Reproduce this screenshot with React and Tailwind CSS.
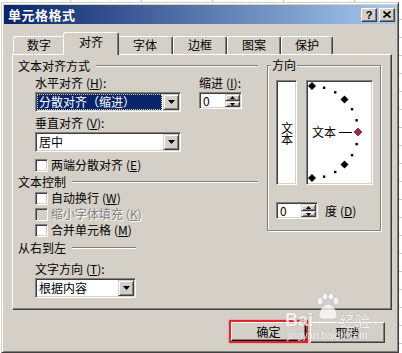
import React from 'react';

const raised = 'border border-t-white border-l-white border-r-[#404040] border-b-[#404040] shadow-[inset_-1px_-1px_#808080]';
const sunken = 'border border-t-[#808080] border-l-[#808080] border-r-white border-b-white shadow-[inset_1px_1px_#404040,inset_-1px_-1px_#d4d0c8]';
const arrowBtn = 'bg-[#d4d0c8] border border-t-[#d4d0c8] border-l-[#d4d0c8] border-r-[#404040] border-b-[#404040] shadow-[inset_1px_1px_white,inset_-1px_-1px_#808080]';

const Key = ({ children }) => (
    <span className="ml-[3px]">(<u>{children}</u>)</span>
);

const GroupTitle = ({ children, className = '' }) => (
    <div className={`flex items-center h-[14px] ${className}`}>
        <span className="whitespace-nowrap">{children}</span>
        <div className="flex-1 ml-[6px] h-[2px] border-t border-t-[#808080] border-b border-b-white" />
    </div>
);

const DownArrow = () => (
    <svg width="7" height="4" viewBox="0 0 7 4">
        <path d="M0 0h7L3.5 4z" fill="#000" />
    </svg>
);

const Select = ({ value, className = '', selected = false }) => (
    <div className={`${sunken} ${className} h-[20px] bg-white p-[1px] flex`}>
        <div className="flex-1 min-w-0 flex items-center pr-[1px]">
            {selected ? (
                <div className="w-full h-full bg-[#0a246a] text-white flex items-center pl-[1px] border border-dotted border-[#d8d0a0] whitespace-nowrap">
                    {value}
                </div>
            ) : (
                <span className="pl-[2px] whitespace-nowrap">{value}</span>
            )}
        </div>
        <div className={`${arrowBtn} w-[16px] h-full flex items-center justify-center`}>
            <DownArrow />
        </div>
    </div>
);

const Spin = ({ className = '' }) => (
    <div className={`${sunken} ${className} h-[17px] bg-white p-[1px] flex`}>
        <span className="flex-1 pl-[2px] flex items-center">0</span>
        <div className="w-[15px] flex flex-col">
            <div className={`${arrowBtn} h-[7px] flex items-center justify-center`}>
                <svg width="5" height="3" viewBox="0 0 5 3"><path d="M2.5 0L5 3H0z" fill="#000" /></svg>
            </div>
            <div className={`${arrowBtn} flex-1 flex items-center justify-center`}>
                <svg width="5" height="3" viewBox="0 0 5 3"><path d="M0 0h5L2.5 3z" fill="#000" /></svg>
            </div>
        </div>
    </div>
);

const Check = ({ label, disabled = false, className = '' }) => (
    <div className={`flex items-center pl-[17px] ${className}`}>
        <div className={`${sunken} w-[13px] h-[13px] ${disabled ? 'bg-[#d4d0c8]' : 'bg-white'}`} />
        <span className={`ml-[3px] whitespace-nowrap ${disabled ? 'text-[#808080] [text-shadow:1px_1px_0_#fff]' : ''}`}>
            {label}
        </span>
    </div>
);

const Tab = ({ label, w, active = false }) =>
    active ? (
        <div className={`${w} -mx-[2px] h-[23px] -mb-[1px] relative z-10 bg-[#d4d0c8] border-l border-t border-r border-l-white border-t-white border-r-[#404040] shadow-[inset_-1px_0_#808080] rounded-t-[3px] flex justify-center pt-[2px]`}>
            {label}
        </div>
    ) : (
        <div className={`${w} h-[18px] border-l border-t border-r border-l-white border-t-white border-r-[#404040] shadow-[inset_-1px_0_#808080] rounded-t-[3px] flex justify-center pt-[1px]`}>
            {label}
        </div>
    );

const Dial = () => {
    const marks = [];
    for (let i = 0; i <= 12; i++) {
        const a = ((-90 + 15 * i) * Math.PI) / 180;
        const x = 4 + 46 * Math.cos(a);
        const y = 50 + 46 * Math.sin(a);
        if (i === 6) {
            marks.push(<path key={i} d={`M${x} ${y - 4}L${x + 4} ${y}L${x} ${y + 4}L${x - 4} ${y}z`} fill="#9b2a3c" stroke="#3a1018" strokeWidth="0.6" />);
        } else if (i % 3 === 0) {
            marks.push(<path key={i} d={`M${x} ${y - 4}L${x + 4} ${y}L${x} ${y + 4}L${x - 4} ${y}z`} fill="#000" />);
        } else {
            marks.push(<rect key={i} x={x - 1} y={y - 1} width="2.4" height="2.4" fill="#000" />);
        }
    }
    return (
        <svg width="63" height="101" viewBox="0 0 63 101" className="block">
            {marks}
            <text x="4" y="55" fontSize="12" fontFamily="Noto Sans CJK SC, sans-serif" fill="#000">文本</text>
            <line x1="31" y1="50.5" x2="44" y2="50.5" stroke="#000" strokeWidth="1" />
        </svg>
    );
};

export default function App() {
    return (
        <div className="relative w-[402px] h-[353px] overflow-hidden bg-white flex flex-col font-['Noto_Sans_CJK_SC','Noto_Sans',sans-serif] text-[12px] leading-[14px] text-black">
            <div className="h-[2px] shrink-0 bg-[repeating-linear-gradient(to_right,white_0,white_70px,#c8c8c8_70px,#c8c8c8_71px)]" />
            <div className="flex flex-1 min-h-0">
                <div className="w-[1px] shrink-0 bg-white" />
                <div className="w-[398px] h-[351px] shrink-0 bg-[#d4d0c8] border border-t-[#d4d0c8] border-l-[#d4d0c8] border-r-[#404040] border-b-[#404040] shadow-[inset_1px_1px_white,inset_-1px_-1px_#808080] p-[2px] flex flex-col">
                    {/* title bar */}
                    <div className="h-[19px] shrink-0 bg-[linear-gradient(to_right,#0a246a,#a6caf0)] flex items-center pl-[4px] pr-[1px]">
                        <span className="flex-1 text-white font-bold text-[13px] leading-[15px] tracking-[0.5px]">单元格格式</span>
                        <div className={`${raised} w-[16px] h-[14px] bg-[#d4d0c8] flex items-center justify-center font-bold text-[11px] leading-[12px] font-['Liberation_Sans',sans-serif]`}>?</div>
                        <div className={`${raised} ml-[2px] w-[16px] h-[14px] bg-[#d4d0c8] flex items-center justify-center`}>
                            <svg width="8" height="7" viewBox="0 0 8 7">
                                <path d="M0.5 0.5L7.5 6.5M7.5 0.5L0.5 6.5" stroke="#000" strokeWidth="1.6" />
                            </svg>
                        </div>
                    </div>

                    {/* body */}
                    <div className="flex flex-col pl-[8px] pr-[4px] pt-[8px]">
                        <div className="flex items-end h-[22px] pl-[1px]">
                            <Tab label="数字" w="w-[52px]" />
                            <Tab label="对齐" w="w-[56px]" active />
                            <Tab label="字体" w="w-[56px]" />
                            <Tab label="边框" w="w-[54px]" />
                            <Tab label="图案" w="w-[54px]" />
                            <Tab label="保护" w="w-[52px]" />
                        </div>

                        <div className={`${raised} w-[380px] h-[256px] flex pl-[5px] pr-[10px] pt-[4px]`}>
                            {/* left column */}
                            <div className="w-[240px] flex flex-col">
                                <GroupTitle>文本对齐方式</GroupTitle>
                                <div className="flex pl-[17px] mt-[3px]">
                                    <div className="w-[146px] flex flex-col">
                                        <div className="h-[14px]">水平对齐<Key>H</Key>:</div>
                                        <Select className="mt-[2px]" value="分散对齐（缩进）" selected />
                                        <div className="h-[14px] mt-[4px]">垂直对齐<Key>V</Key>:</div>
                                        <Select className="mt-[2px]" value="居中" />
                                    </div>
                                    <div className="ml-[18px] flex flex-col">
                                        <div className="h-[14px]">缩进<Key>I</Key>:</div>
                                        <Spin className="mt-[2px] w-[43px]" />
                                    </div>
                                </div>
                                <Check className="h-[14px] mt-[6px]" label={<>两端分散对齐<Key>E</Key></>} />

                                <GroupTitle className="mt-[3px]">文本控制</GroupTitle>
                                <Check className="h-[16px] mt-[1px]" label={<>自动换行<Key>W</Key></>} />
                                <Check className="h-[16px]" disabled label={<>缩小字体填充<Key>K</Key></>} />
                                <Check className="h-[16px]" label={<>合并单元格<Key>M</Key></>} />

                                <GroupTitle className="mt-[3px] w-[118px]">从右到左</GroupTitle>
                                <div className="pl-[17px] mt-[7px] flex flex-col">
                                    <div className="h-[14px]">文字方向<Key>T</Key>:</div>
                                    <Select className="mt-[2px] w-[101px]" value="根据内容" />
                                </div>
                            </div>

                            {/* orientation group */}
                            <div className="ml-[9px] mt-[6px] w-[114px] h-[166px] relative border border-[#808080] shadow-[inset_1px_1px_white,1px_1px_white] pl-[8px] pt-[14px] flex flex-col">
                                <span className="absolute -top-[8px] left-[3px] px-[1px] bg-[#d4d0c8]">方向</span>
                                <div className="flex gap-[9px]">
                                    <div className={`${sunken} w-[21px] h-[105px] bg-white flex items-center justify-center`}>
                                        <span className="[writing-mode:vertical-rl] leading-[18px] tracking-[-1px]">文本</span>
                                    </div>
                                    <div className={`${sunken} w-[67px] h-[105px] bg-white p-[1px]`}>
                                        <Dial />
                                    </div>
                                </div>
                                <div className="flex items-center mt-[17px]">
                                    <Spin className="w-[42px]" />
                                    <span className="ml-[7px]">度<Key>D</Key></span>
                                </div>
                            </div>
                        </div>

                        {/* buttons */}
                        <div className="flex justify-end items-end pr-[7px] mt-[10px]">
                            <div className="w-[79px] h-[23px] border-2 border-[#e1252b] shadow-[0_0_2px_#f07070] flex">
                                <div className={`flex-1 ${raised} border-r-black border-b-black flex items-center justify-center`}>确定</div>
                            </div>
                            <div className={`${raised} ml-[2px] w-[75px] h-[21px] flex items-center justify-center`}>取消</div>
                        </div>
                    </div>
                </div>
                <div className="flex-1 bg-[repeating-linear-gradient(to_bottom,white_0,white_17px,#c8c8c8_17px,#c8c8c8_18px)]" />
            </div>

            {/* Baidu jingyan watermark overlay */}
            <div className="absolute left-[285px] top-[293px] w-[92px] h-[50px] pointer-events-none opacity-75">
                <svg width="24" height="30" viewBox="0 0 24 30" className="absolute left-[30px] top-0">
                    <g fill="#fff" stroke="#b8b8b8" strokeWidth="0.8">
                        <ellipse cx="5" cy="8" rx="3" ry="4" />
                        <ellipse cx="10" cy="3.5" rx="3" ry="3.5" />
                        <ellipse cx="16" cy="3.5" rx="3" ry="3.5" />
                        <ellipse cx="21" cy="8" rx="3" ry="4" />
                        <path d="M13 11c-4 0-8 6-9 10-1 5 4 6 9 5 5 1 10 0 9-5-1-4-5-10-9-10z" />
                    </g>
                </svg>
                <span className="absolute left-0 top-[18px] text-[18px] leading-[18px] font-bold text-white font-['Liberation_Sans',sans-serif] [text-shadow:0_0_1px_#888]">Bai</span>
                <span className="absolute left-[55px] top-[20px] text-[15px] leading-[16px] text-white [text-shadow:0_0_1px_#888]">经验</span>
                <span className="absolute left-[2px] top-[37px] text-[10px] leading-[11px] text-white font-['Liberation_Sans',sans-serif] [text-shadow:0_0_1px_#999]">jingyan.baidu.com</span>
            </div>
        </div>
    );
}
